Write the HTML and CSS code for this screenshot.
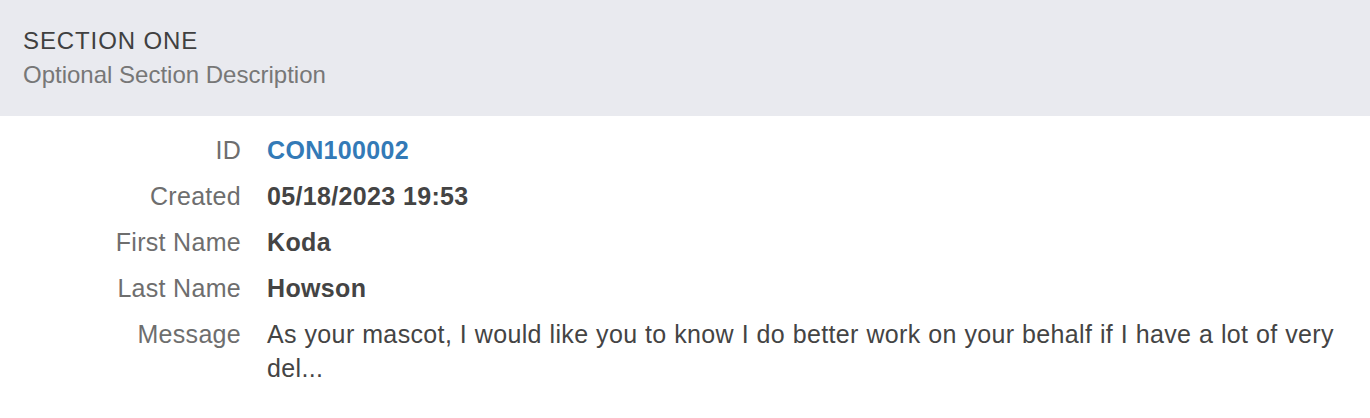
FILE: index.html
```html
<!DOCTYPE html>
<html>
<head>
<meta charset="utf-8">
<link rel="stylesheet" href="styles.css">
</head>
<body>
<section class="section">
  <header class="section-header">
    <div class="section-title">SECTION ONE</div>
    <div class="section-desc">Optional Section Description</div>
  </header>
  <dl class="fields">
    <dt class="label">ID</dt>
    <dd class="value value-link">CON100002</dd>
    <dt class="label">Created</dt>
    <dd class="value value-strong">05/18/2023 19:53</dd>
    <dt class="label">First Name</dt>
    <dd class="value value-strong">Koda</dd>
    <dt class="label">Last Name</dt>
    <dd class="value value-strong">Howson</dd>
    <dt class="label">Message</dt>
    <dd class="value value-text">As your mascot, I would like you to know I do better work on your behalf if I have a lot of very del...</dd>
  </dl>
</section>
</body>
</html>
```
FILE: styles.css
```css
html, body {
  margin: 0;
  padding: 0;
  background: #ffffff;
}
body {
  font-family: "Liberation Sans", Arial, Helvetica, sans-serif;
  font-size: 25px;
  line-height: 34px;
}
.section-header {
  background: #e9eaef;
  height: 116px;
  box-sizing: border-box;
  padding: 24px 23px 0;
}
.section-title {
  color: #404040;
  font-size: 24px;
  line-height: 34px;
  letter-spacing: 0.9px;
}
.section-desc {
  color: #777777;
  font-size: 24px;
  line-height: 34px;
}
.fields {
  display: grid;
  grid-template-columns: 241px 1fr;
  column-gap: 26px;
  row-gap: 12px;
  margin: 0;
  padding: 17px 20px 0 0;
}
.label {
  text-align: right;
  color: #6e6e6e;
  margin: 0;
  letter-spacing: 0.3px;
}
.value {
  margin: 0;
  color: #444444;
  letter-spacing: 0.35px;
}
.value-text {
  word-spacing: 0.35px;
}
.value-strong {
  font-weight: bold;
}
.value-link {
  font-weight: bold;
  color: #337ab7;
}
```
